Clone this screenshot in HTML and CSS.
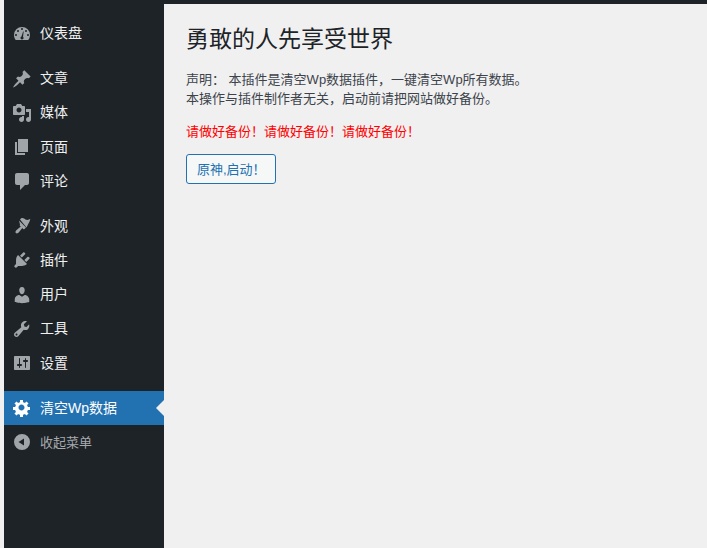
FILE: index.html
```html
<!DOCTYPE html>
<html lang="zh-CN">
<head>
    <meta charset="UTF-8">
    <title>清空Wp数据</title>
    <link rel="stylesheet" href="styles.css">
</head>
<body>
    <div class="adminbar"></div>
    <div class="wrap-all">
        <div class="sidebar">
            <ul class="menu first">
                <li><svg class="ico" viewBox="0 0 20 20"><path d="M3.76 16h12.480A7.970 7.970 0 0 0 18 11a8 8 0 1 0-16 0c0 1.900.660 3.640 1.760 5zM10 4a1 1 0 1 1 0 2 1 1 0 0 1 0-2zM6 6a1 1 0 1 1 0 2 1 1 0 0 1 0-2zm8 0a1 1 0 1 1 0 2 1 1 0 0 1 0-2zM4 10a1 1 0 1 1 0 2 1 1 0 0 1 0-2zm12 0a1 1 0 1 1 0 2 1 1 0 0 1 0-2zM8.600 14.500c-.3-.8.100-1.600.9-1.900l1.600-5.200.6.200-.7 5.200c.6.500.8 1.400.3 2-.3.400-.8.600-1.300.6-.6 0-1.200-.3-1.400-.9z"/></svg>仪表盘</li>
            </ul>
            <ul class="menu">
                <li><svg class="ico" viewBox="0 0 20 20"><path d="M10.440 3.020l1.820-1.820 6.360 6.350-1.830 1.820c-1.050-.680-2.480-.570-3.410.360l-.750.750c-.920.930-1.040 2.350-.350 3.410l-1.830 1.820-2.410-2.410-2.800 2.790c-.420.420-3.380 2.710-3.800 2.290s1.860-3.390 2.280-3.810l2.790-2.790L4.100 9.360l1.830-1.820c1.050.690 2.480.570 3.400-.360l.750-.750c.930-.920 1.050-2.350.360-3.410z"/></svg>文章</li>
                <li><svg class="ico" viewBox="0 0 20 20"><path d="M13 11V4c0-.55-.45-1-1-1h-1.670L9 1H5L3.670 3H2c-.55 0-1 .45-1 1v7c0 .55.45 1 1 1h10c.55 0 1-.45 1-1zM7 4.500c1.380 0 2.500 1.120 2.500 2.500S8.380 9.500 7 9.500 4.500 8.380 4.500 7 5.620 4.500 7 4.500zM14 6h5v10.500c0 1.380-1.120 2.500-2.500 2.500S14 17.880 14 16.500s1.120-2.500 2.500-2.500c.17 0 .34.020.5.050V9h-3V6zm-4 8.050V13h2v3.500c0 1.380-1.120 2.500-2.500 2.500S7 17.880 7 16.500 8.120 14 9.500 14c.17 0 .34.020.5.050z"/></svg>媒体</li>
                <li><svg class="ico" viewBox="0 0 20 20"><path d="M6 15V2h10v13H6zm-1 1h8v2H3V5h2v11z"/></svg>页面</li>
                <li><svg class="ico" viewBox="0 0 20 20"><path d="M5 2h10c1.100 0 2 .9 2 2v8c0 1.100-.9 2-2 2h-2l-5 5v-5H5c-1.100 0-2-.9-2-2V4c0-1.100.9-2 2-2z"/></svg>评论</li>
            </ul>
            <ul class="menu">
                <li><svg class="ico" viewBox="0 0 20 20"><path d="M8 3.400l1-1c.8-.7 2.400-.5 3.500.3 1.200.8 1.500 1.200 2.800 1.200 1.200 0 2-.5 3-1.100-.3 1.200-.5 2.700-1.400 4l-2.400 4.600z"/><path d="M7 4.400l7 7-1.500 1.500c-.4.4-1 .4-1.400 0l-.8-.8-3.600 4.500c-.8.8-2 1.200-2.800.4s-.4-2 .4-2.800l4.500-3.600-.8-.8c-.4-.4-.4-1 0-1.400z"/></svg>外观</li>
                <li><svg class="ico" viewBox="0 0 20 20"><path d="M13.110 4.360L9.870 7.600 8 5.730l3.240-3.240c.35-.34 1.050-.2 1.560.32.520.51.660 1.210.31 1.550zm-8 1.770l.91-1.120 9.010 9.010-1.190.84c-.71.710-2.630 1.160-3.820 1.160H6.140L4.900 17.260c-.59.590-1.540.59-2.120 0-.59-.58-.59-1.530 0-2.120l1.240-1.240v-3.880c0-1.130.4-3.180 1.090-3.890zm7.260 3.970l3.240-3.240c.34-.35 1.040-.21 1.550.31.520.51.660 1.210.31 1.550l-3.240 3.250z"/></svg>插件</li>
                <li><svg class="ico" viewBox="0 0 20 20"><path d="M10 9.250c-2.270 0-2.730-3.440-2.730-3.440C7 4.020 7.820 2 9.970 2c2.160 0 2.980 2.020 2.710 3.810 0 0-.41 3.440-2.680 3.440zm0 2.570L12.720 10c2.390 0 4.520 2.330 4.520 4.530v2.490s-3.650 1.130-7.240 1.130c-3.650 0-7.240-1.130-7.240-1.130v-2.490c0-2.250 1.940-4.480 4.470-4.480z"/></svg>用户</li>
                <li><svg class="ico" viewBox="0 0 20 20"><path d="M16.680 9.770c-1.340 1.340-3.300 1.670-4.950.99l-5.410 6.520c-.99.990-2.590.99-3.570 0-.99-.98-.99-2.580 0-3.570l6.520-5.420c-.68-1.650-.35-3.610.99-4.950 1.280-1.280 3.120-1.640 4.720-1.110L11.880 5.300l.53 2.120 2.120.53 2.570-2.580c.53 1.600.17 3.440-1.110 4.720zM3.810 16.210c.4.390 1.030.39 1.420 0 .4-.39.400-1.030 0-1.420-.39-.39-1.020-.39-1.420 0-.39.390-.39 1.030 0 1.420z"/></svg>工具</li>
                <li><svg class="ico" viewBox="0 0 20 20"><path fill-rule="evenodd" d="M18 16V4c0-.55-.45-1-1-1H3c-.55 0-1 .45-1 1v12c0 .55.45 1 1 1h14c.55 0 1-.45 1-1zM8 11h1c.55 0 1 .45 1 1s-.45 1-1 1H8v1.500c0 .28-.22.5-.5.5s-.5-.22-.5-.5V13H6c-.55 0-1-.45-1-1s.45-1 1-1h1V5.500c0-.28.22-.5.5-.5s.5.220.5.500V11zm5-2h-1c-.55 0-1-.45-1-1s.45-1 1-1h1V5.500c0-.28.22-.5.5-.5s.5.220.5.500V7h1c.55 0 1 .45 1 1s-.45 1-1 1h-1v5.500c0 .28-.22.5-.5.5s-.5-.22-.5-.5V9z"/></svg>设置</li>
            </ul>
            <ul class="menu">
                <li class="current"><svg class="ico" viewBox="0 0 20 20"><path d="M18 12h-2.180c-.17.7-.44 1.350-.81 1.930l1.540 1.540-2.100 2.100-1.540-1.540c-.58.360-1.230.640-1.910.810V19H8v-2.180c-.68-.170-1.330-.450-1.910-.810l-1.540 1.540-2.120-2.120 1.540-1.540c-.36-.58-.64-1.230-.81-1.910H1V9h2.180c.17-.68.450-1.330.81-1.910L2.450 5.550l2.100-2.100 1.540 1.540c.58-.36 1.230-.64 1.910-.81V2h3v2.180c.68.170 1.330.450 1.910.810l1.540-1.540 2.120 2.120-1.540 1.540c.36.580.64 1.230.81 1.910H18v3zM9.500 6.500c-1.660 0-3 1.340-3 3s1.340 3 3 3 3-1.340 3-3-1.340-3-3-3z"/></svg>清空Wp数据</li>
                <li class="collapse"><svg class="ico" viewBox="0 0 20 20"><path d="M10 2a8 8 0 1 0 0 16 8 8 0 0 0 0-16zm2 4.500v7L6.500 10z"/></svg>收起菜单</li>
            </ul>
        </div>
        <div class="main">
            <h1>勇敢的人先享受世界</h1>
            <p>声明： 本插件是清空Wp数据插件，一键清空Wp所有数据。<br>本操作与插件制作者无关，启动前请把网站做好备份。</p>
            <p class="warn">请做好备份！请做好备份！请做好备份！</p>
            <button class="btn">原神,启动！</button>
        </div>
    </div>
</body>
</html>
```

FILE: styles.css
```css
* {
    box-sizing: border-box;
}
html, body {
    height: 100%;
}
body {
    margin: 0;
    background: #f0f0f1;
    color: #3c434a;
    font-family: "Liberation Sans", "Noto Sans CJK SC", sans-serif;
    font-size: 13px;
    line-height: 1.5;
    overflow: hidden;
}
.adminbar {
    height: 4px;
    margin-left: 4px;
    background: #1d2327;
}
.wrap-all {
    display: flex;
    height: 544px;
    padding-left: 4px;
}
.sidebar {
    width: 160px;
    background: #1d2327;
    padding-top: 12.500px;
}
.menu {
    list-style: none;
    margin: 0 0 10.650px;
    padding: 0;
}
.menu li {
    display: flex;
    align-items: center;
    height: 34.250px;
    padding-left: 8px;
    color: #f0f0f1;
    font-size: 14px;
}
.ico {
    width: 20px;
    height: 20px;
    margin-right: 8px;
    fill: #a0a5aa;
}
.menu li.current {
    position: relative;
    background: #2271b1;
    color: #fff;
}
.menu li.current .ico {
    fill: #fff;
}
.menu li.current::after {
    content: "";
    position: absolute;
    right: 0;
    top: 50%;
    margin-top: -8px;
    border: 8px solid transparent;
    border-right-color: #f0f0f1;
    border-left-width: 0;
}
.menu li.collapse {
    color: #a7aaad;
    font-size: 13px;
}
.main {
    flex: 1;
    padding: 0 22px;
}
h1 {
    margin: 21px 0 15px;
    font-size: 23px;
    font-weight: 400;
    line-height: 1.3;
    color: #1d2327;
}
p {
    margin: 13px 0;
}
.warn {
    color: #ff0000;
}
.btn {
    display: block;
    height: 30px;
    padding: 0 9px 0 10px;
    background: #f6f7f7;
    border: 1px solid #2271b1;
    border-radius: 3px;
    color: #2271b1;
    font: inherit;
    white-space: nowrap;
    cursor: pointer;
}
```
